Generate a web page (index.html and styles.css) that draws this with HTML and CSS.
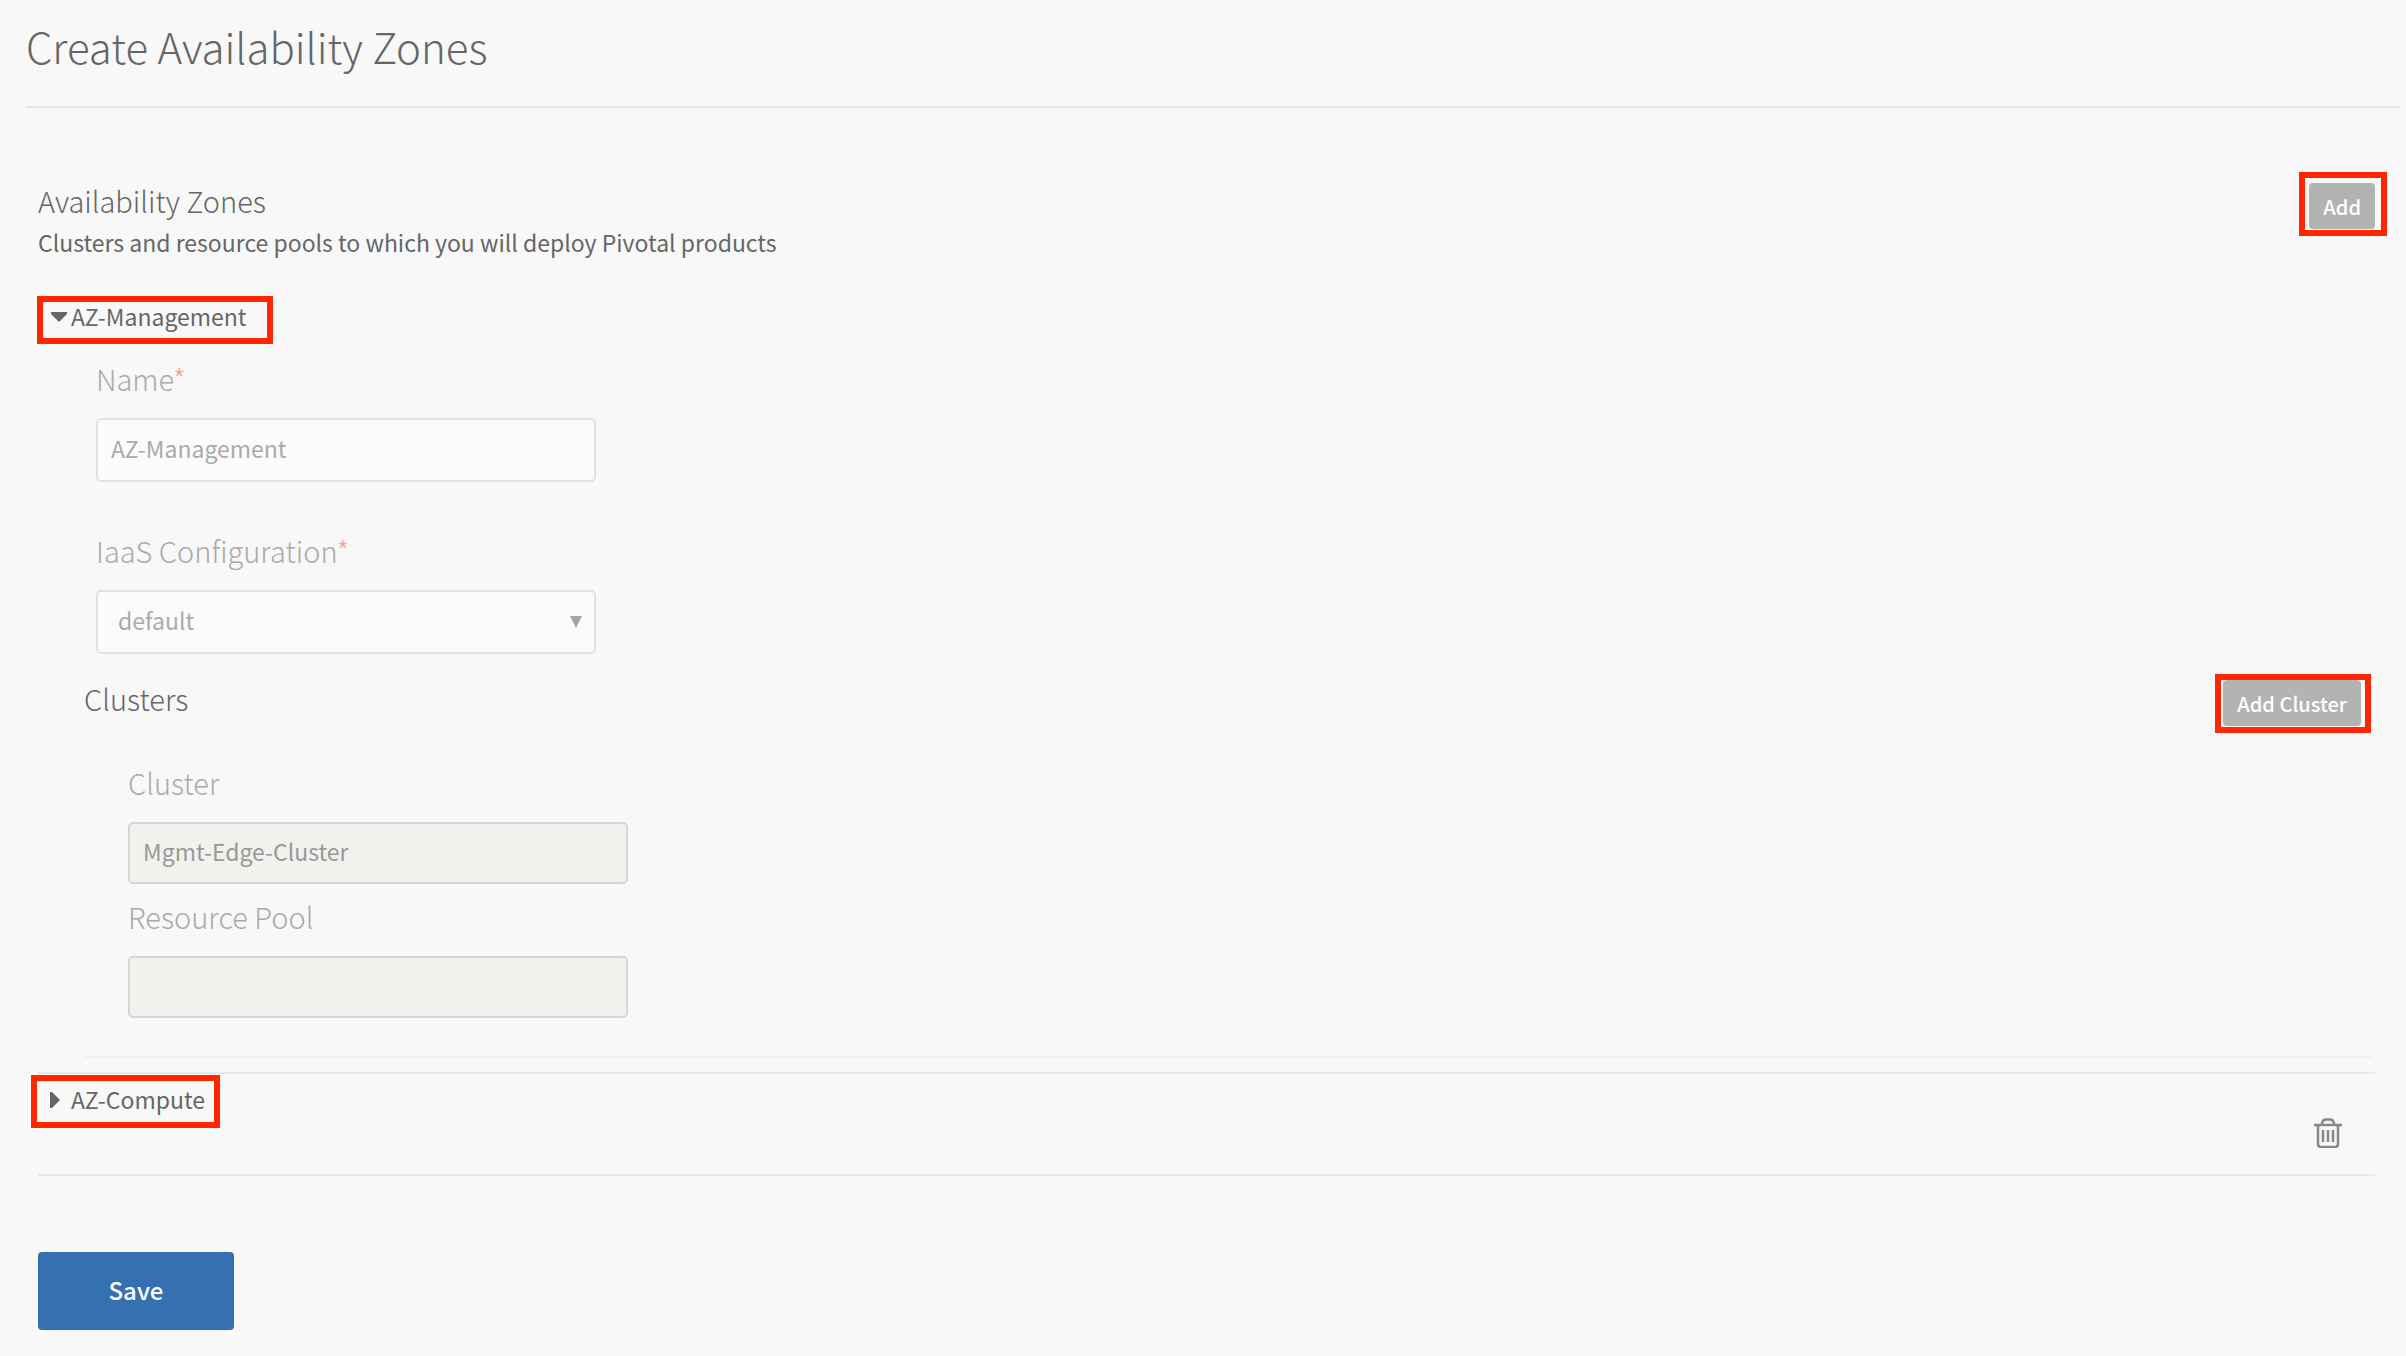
FILE: index.html
```
<!DOCTYPE html>
<html lang="en">
<head>
    <meta charset="UTF-8">
    <meta name="viewport" content="width=device-width, initial-scale=1.0">
    <title>Create Availability Zones</title>
    <link rel="stylesheet" href="styles.css">
</head>
<body>

    <header class="page-header">
        <h1>Create Availability Zones</h1>
    </header>

    <form class="content">
        <div class="section-header">
            <div>
                <h2>Availability Zones</h2>
                <p class="description">Clusters and resource pools to which you will deploy Pivotal products</p>
            </div>
            <div class="highlight highlight-add">
                <button type="button" class="btn">Add</button>
            </div>
        </div>

        <!-- Expanded zone -->
        <details class="zone" open>
            <summary class="highlight toggle toggle-open">
                <svg class="arrow" viewBox="0 0 16 16" aria-hidden="true"><path d="M0 3h16v2L8 13 0 5z"/></svg>
                <span>AZ-Management</span>
            </summary>

            <div class="fields">
                <label for="name">Name<span class="required">*</span></label>
                <input type="text" id="name" value="AZ-Management">

                <label for="iaas">IaaS Configuration<span class="required">*</span></label>
                <div class="select-wrap">
                    <select id="iaas">
                        <option>default</option>
                    </select>
                    <svg class="caret" viewBox="0 0 12 12" aria-hidden="true"><path d="M0 0h12L6 12z"/></svg>
                </div>
            </div>

            <div class="clusters">
                <div class="clusters-header">
                    <h3>Clusters</h3>
                    <div class="highlight highlight-cluster">
                        <button type="button" class="btn">Add Cluster</button>
                    </div>
                </div>
                <div class="cluster">
                    <label for="cluster">Cluster</label>
                    <input type="text" id="cluster" value="Mgmt-Edge-Cluster" readonly>
                    <label for="pool">Resource Pool</label>
                    <input type="text" id="pool" readonly>
                </div>
            </div>
        </details>

        <!-- Collapsed zone -->
        <div class="zone-row">
            <details>
                <summary class="highlight toggle toggle-closed">
                    <svg class="arrow" viewBox="0 0 16 16" aria-hidden="true"><path d="M3 0h2l8 8-8 8H3z"/></svg>
                    <span>AZ-Compute</span>
                </summary>
            </details>
            <button type="button" class="delete" aria-label="Delete AZ-Compute">
                <svg viewBox="0 0 28 30" fill="none" stroke="#888" stroke-width="2.5" aria-hidden="true">
                    <path d="M0 7h28M8 7V5q1-3.500 4-3.500h4q3 0 4 3.500v2M4 7v19q0 3 3 3h14q3 0 3-3V7"/>
                    <path d="M9 12v12M14 12v12M19 12v12"/>
                </svg>
            </button>
        </div>

        <button type="submit" class="save">Save</button>
    </form>

</body>
</html>
```

FILE: styles.css
```
* {
    box-sizing: border-box;
}

body {
    margin: 0;
    padding: 0 6px 24px 26px;
    background-color: #f8f8f8;
    color: #666;
    font-family: "Noto Sans CJK SC", "Noto Sans", sans-serif;
    font-size: 23px;
    line-height: 28px;
}

h1, h2, h3, p {
    margin: 0;
}

h1 {
    font-size: 42px;
    font-weight: 300;
    line-height: 60px;
}

h2, h3, label {
    display: block;
    font-size: 29px;
    font-weight: 300;
    line-height: 40px;
}

input, select, button {
    font-family: inherit;
    font-size: 23px;
}

.page-header {
    padding: 16px 0 30px;
    border-bottom: 2px solid #e4e4e4;
}

.content {
    padding: 64px 13px 0 12px;
}

.section-header {
    display: flex;
    justify-content: space-between;
    align-items: flex-start;
}

.section-header h2 {
    margin-top: 8px;
}

.description {
    margin-top: 4px;
    line-height: 36px;
}

/* Red frames */
.highlight {
    border: 6px solid #ff2600;
}

.highlight-add {
    padding: 5px 6px 1px 4px;
}

.highlight-cluster {
    padding: 0 4px 1px 2px;
}

.btn {
    display: block;
    height: 46px;
    padding: 0 14px;
    border: none;
    border-radius: 4px;
    background-color: #b3b3b3;
    color: #fff;
    font-size: 20px;
    font-weight: 500;
    cursor: pointer;
}

/* Zone toggles */
.toggle {
    display: flex;
    width: fit-content;
    list-style: none;
    cursor: pointer;
}

.arrow {
    width: 16px;
    height: 16px;
    fill: #666;
}

.toggle-open {
    margin: 36px 0 0 -1px;
    padding: 0 20px 8px 8px;
}

.toggle-open .arrow {
    margin: 7px 4px 0 0;
}

.toggle-closed {
    margin-left: -7px;
    padding: 4px 9px 9px 10px;
}

.toggle-closed .arrow {
    margin: 7px 8px 0 0;
}

/* Form fields */
.fields {
    padding: 14px 0 0 58px;
}

.fields label, .cluster label {
    color: #aaa;
    margin-bottom: 20px;
}

.required {
    color: #ff9d8c;
}

input, select {
    display: block;
    width: 500px;
    height: 64px;
    padding: 0 13px 4px;
    border: 2px solid #e2e2e2;
    border-radius: 5px;
    background-color: #fbfbfb;
    color: #aaa;
}

.fields input {
    margin-bottom: 48px;
}

.select-wrap {
    position: relative;
    width: 500px;
}

select {
    padding-left: 20px;
    appearance: none;
}

.caret {
    position: absolute;
    top: 26px;
    right: 14px;
    width: 12px;
    height: 12px;
    fill: #a6a6a6;
    pointer-events: none;
}

.clusters {
    margin: 20px 14px 14px 46px;
    padding-bottom: 38px;
    border-bottom: 2px solid #f1f1f1;
}

.clusters-header {
    display: flex;
    justify-content: space-between;
    align-items: flex-start;
    margin-right: 2px;
}

.clusters-header h3 {
    margin-top: 4px;
}

.cluster {
    padding: 29px 0 0 44px;
}

.cluster input {
    height: 62px;
    border-color: #d6d6d4;
    background-color: #f1f1ed;
    color: #999;
}

.cluster input + label {
    margin-top: 12px;
}

/* Collapsed row */
.zone-row {
    display: flex;
    justify-content: space-between;
    align-items: flex-start;
    margin-right: 12px;
    padding: 1px 33px 26px 0;
    border: solid #e8e8e8;
    border-width: 2px 0;
}

.delete {
    margin-top: 43px;
    padding: 0;
    border: none;
    background: none;
    cursor: pointer;
}

.delete svg {
    display: block;
    width: 28px;
    height: 30px;
}

.save {
    width: 196px;
    height: 78px;
    margin-top: 76px;
    padding: 0 0 4px;
    border: none;
    border-radius: 4px;
    background-color: #3570b2;
    color: #fff;
    font-size: 24px;
    font-weight: 500;
    cursor: pointer;
}
```
